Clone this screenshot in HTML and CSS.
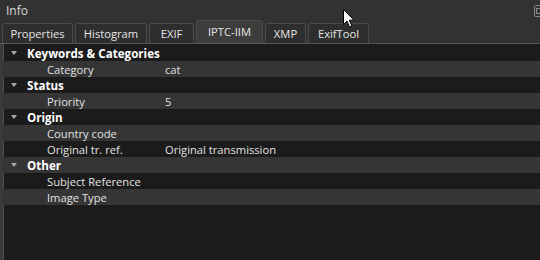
FILE: index.html
```html
<!DOCTYPE html>
<html lang="en">
<head>
    <meta charset="UTF-8">
    <title>Info</title>
    <link rel="stylesheet" href="styles.css">
</head>
<body>

    <div class="panel">
        <div class="panel-title">
            <span>Info</span>
            <svg class="float-btn" width="10" height="12" viewBox="0 0 10 12">
                <rect x="0.5" y="0.5" width="9" height="11" rx="1" fill="none" stroke="#8a8a8a"/>
                <rect x="2.5" y="3.5" width="5" height="5" fill="none" stroke="#8a8a8a"/>
            </svg>
        </div>

        <div class="tabs">
            <div class="tab" style="width:71px">Properties</div>
            <div class="tab" style="width:72px">Histogram</div>
            <div class="tab" style="width:45px">EXIF</div>
            <div class="tab active" style="width:67px">IPTC-IIM</div>
            <div class="tab" style="width:41px">XMP</div>
            <div class="tab" style="width:61px">ExifTool</div>
        </div>

        <div class="content">
            <div class="tree">
                <div class="row group"><span class="arrow"></span>Keywords &amp; Categories</div>
                <div class="row"><span class="name">Category</span><span class="value">cat</span></div>
                <div class="row group"><span class="arrow"></span>Status</div>
                <div class="row"><span class="name">Priority</span><span class="value">5</span></div>
                <div class="row group"><span class="arrow"></span>Origin</div>
                <div class="row"><span class="name">Country code</span><span class="value"></span></div>
                <div class="row"><span class="name">Original tr. ref.</span><span class="value">Original transmission</span></div>
                <div class="row group"><span class="arrow"></span>Other</div>
                <div class="row"><span class="name">Subject Reference</span><span class="value"></span></div>
                <div class="row"><span class="name">Image Type</span><span class="value"></span></div>
            </div>
        </div>
    </div>

    <!-- mouse pointer from the capture -->
    <svg class="cursor" width="13" height="20" viewBox="0 0 13 20">
        <path d="M0.5 0.5 L0.5 15.5 L4 12 L6.5 18 L8.8 17 L6.3 11.2 L11 11.2 Z" fill="#fff" stroke="#000" stroke-width="1"/>
    </svg>

</body>
</html>
```

FILE: styles.css
```css
body {
    margin: 0;
    background-color: #323232;
    color: #e2e2e2;
    font-family: 'Open Sans', 'Noto Sans', sans-serif;
    font-size: 11.2px;
    width: 540px;
    height: 260px;
    overflow: hidden;
}
.panel {
    display: flex;
    flex-direction: column;
    height: 260px;
}
.panel-title {
    height: 20px;
    display: flex;
    align-items: center;
    justify-content: space-between;
    padding-left: 6px;
    font-size: 12px;
    color: #d8d8d8;
}
.float-btn {
    margin-right: -4px;
    margin-top: 1px;
}
.tabs {
    display: flex;
    align-items: flex-end;
    gap: 2px;
    height: 23px;
    padding-left: 2px;
    border-bottom: 1px solid #575757;
}
.tab {
    box-sizing: border-box;
    height: 20px;
    border: 1px solid #4a4a4a;
    border-bottom: none;
    border-radius: 3px 3px 0 0;
    background-color: #2e2e2e;
    color: #e6e6e6;
    text-align: center;
    line-height: 19px;
}
.tab.active {
    height: 23px;
    background-color: #3d3d3d;
    line-height: 22px;
}
.content {
    flex: 1;
    display: flex;
    background-color: #1b1b1b;
    border-left: 3px solid #3a3a3a;
    box-shadow: inset 1px 0 0 #4e4e4e;
}
.tree {
    flex: 1;
    padding-top: 1px;
}
.row {
    display: flex;
    align-items: center;
    height: 16px;
}
.row:nth-child(even) {
    background-color: #353535;
}
.row.group {
    font-weight: bold;
    font-size: 11.6px;
    color: #fff;
    padding-left: 8px;
}
.arrow {
    width: 0;
    height: 0;
    border-left: 3.5px solid transparent;
    border-right: 3.5px solid transparent;
    border-top: 4px solid #a8a8a8;
    margin-right: 10px;
}
.name {
    width: 118px;
    padding-left: 44px;
}
.cursor {
    position: absolute;
    left: 343px;
    top: 9px;
}
```
